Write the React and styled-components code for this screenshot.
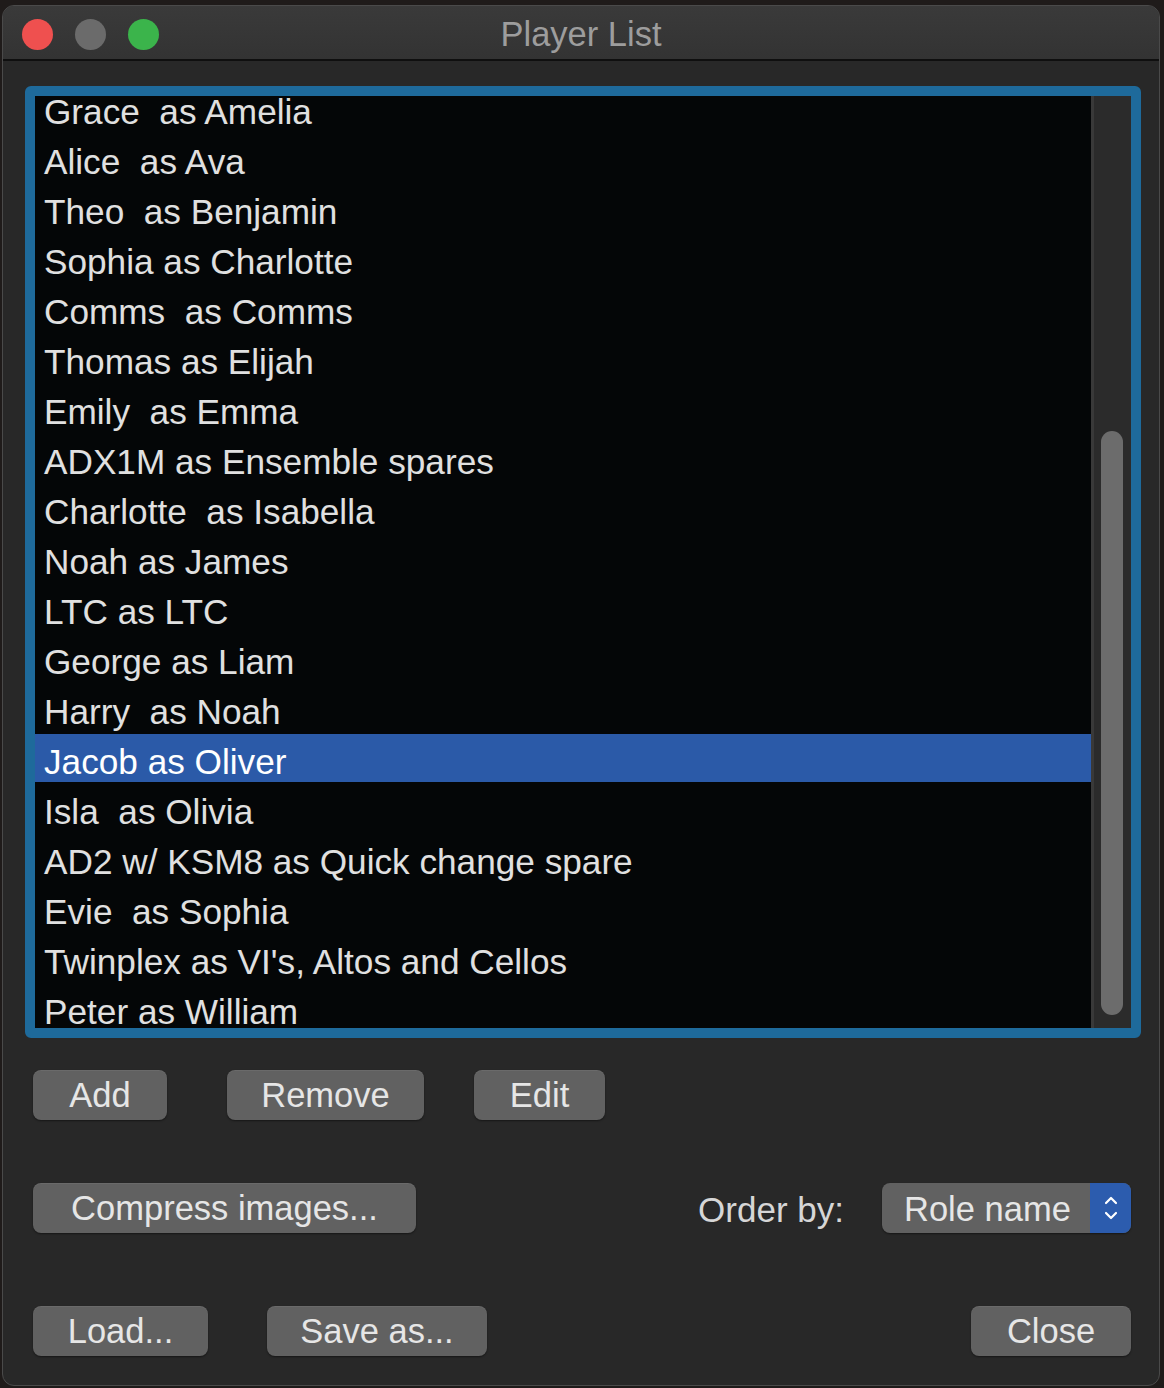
import React from 'react';
import styled, { createGlobalStyle } from 'styled-components';

const GlobalStyle = createGlobalStyle`
  html, body {
    margin: 0;
    padding: 0;
    background: #1f1b1a;
    font-family: 'Liberation Sans', Arial, sans-serif;
  }
`;

const Window = styled.div`
  margin: 5px 0 0 2px;
  width: 1158px;
  height: 1381px;
  box-sizing: border-box;
  border: 1px solid #4a4a4a;
  border-radius: 12px;
  overflow: hidden;
  background: #282828;
  display: flex;
  flex-direction: column;
`;

const TitleBar = styled.div`
  height: 55px;
  flex: none;
  box-sizing: border-box;
  padding: 4px 0 0 19px;
  display: grid;
  grid-template-columns: 1fr auto 1fr;
  align-items: center;
  background: linear-gradient(#3a3a3a, #333333);
  border-bottom: 2px solid #0f0f0f;
`;

const Lights = styled.div`
  display: flex;
  gap: 22px;
`;

const Light = styled.span`
  width: 31px;
  height: 31px;
  border-radius: 50%;
  background: ${p => p.$color};
`;

const Title = styled.div`
  font-size: 34.5px;
  color: #9d9d9d;
  padding-right: 19px;
`;

const Body = styled.div`
  padding: 25px 18px 0 22px;
`;

const ListBox = styled.div`
  width: 1116px;
  height: 952px;
  box-sizing: border-box;
  border: 10px solid #1e6a9b;
  border-radius: 6px;
  display: flex;
  background: #040607;
`;

const List = styled.div`
  flex: 1;
  overflow: hidden;
`;

// the list is scrolled a little, so the first row is clipped at the top
const Rows = styled.div`
  margin-top: -12px;
`;

const Row = styled.div`
  height: 48px;
  margin-bottom: 2px;
  box-sizing: border-box;
  padding: 5px 0 0 9px;
  line-height: 45px;
  font-size: 35.2px;
  white-space: pre;
  color: ${p => (p.$selected ? '#ffffff' : '#e0e0e0')};
  background: ${p => (p.$selected ? '#2b5aa8' : 'transparent')};
`;

const Track = styled.div`
  width: 40px;
  flex: none;
  box-sizing: border-box;
  border-left: 3px solid #393939;
  background: #2b2b2b;
  display: flex;
  flex-direction: column;
  padding: 335px 0 13px 7px;
`;

const Thumb = styled.div`
  flex: 1;
  width: 22px;
  border-radius: 11px;
  background: #6c6c6c;
`;

const Controls = styled.div`
  padding: 0 10px 0 8px;
  display: flex;
  flex-direction: column;
`;

const ButtonRow = styled.div`
  display: flex;
  align-items: center;
  margin-top: ${p => p.$top}px;
`;

const Button = styled.button`
  width: ${p => p.$w}px;
  height: 50px;
  margin-left: ${p => p.$ml || 0}px;
  border: none;
  border-radius: 8px;
  background: #616161;
  box-shadow: 0 1px 2px rgba(0, 0, 0, 0.45), inset 0 1px 0 rgba(255, 255, 255, 0.06);
  color: #e6e6e6;
  font-family: 'Liberation Sans', Arial, sans-serif;
  font-size: 34.5px;
  padding: 0;
  line-height: 50px;
`;

const Spacer = styled.div`
  flex: 1;
`;

const Label = styled.span`
  font-size: 35px;
  color: #d6d6d6;
  margin-right: 38px;
  padding-top: 3px;
`;

const Select = styled.div`
  width: 249px;
  height: 50px;
  display: flex;
  border-radius: 8px;
  overflow: hidden;
  background: #616161;
  box-shadow: 0 1px 2px rgba(0, 0, 0, 0.45);
`;

const SelectValue = styled.div`
  flex: 1;
  padding-left: 22px;
  line-height: 53px;
  font-size: 34.5px;
  color: #e6e6e6;
`;

const SelectArrows = styled.div`
  width: 41px;
  background: #2c5cae;
  display: flex;
  align-items: center;
  justify-content: center;
`;

const players = [
  'Grace  as Amelia',
  'Alice  as Ava',
  'Theo  as Benjamin',
  'Sophia as Charlotte',
  'Comms  as Comms',
  'Thomas as Elijah',
  'Emily  as Emma',
  'ADX1M as Ensemble spares',
  'Charlotte  as Isabella',
  'Noah as James',
  'LTC as LTC',
  'George as Liam',
  'Harry  as Noah',
  'Jacob as Oliver',
  'Isla  as Olivia',
  'AD2 w/ KSM8 as Quick change spare',
  'Evie  as Sophia',
  "Twinplex as VI's, Altos and Cellos",
  'Peter as William'
];

const App = () => (
  <>
    <GlobalStyle />
    <Window>
      <TitleBar>
        <Lights>
          <Light $color="#ef504f" />
          <Light $color="#6b6b6b" />
          <Light $color="#3bb44b" />
        </Lights>
        <Title>Player List</Title>
        <div />
      </TitleBar>
      <Body>
        <ListBox>
          <List>
            <Rows>
              {players.map(p => (
                <Row key={p} $selected={p === 'Jacob as Oliver'}>
                  {p}
                </Row>
              ))}
            </Rows>
          </List>
          <Track>
            <Thumb />
          </Track>
        </ListBox>
        <Controls>
          <ButtonRow $top={32}>
            <Button $w={134}>Add</Button>
            <Button $w={197} $ml={60}>Remove</Button>
            <Button $w={131} $ml={50}>Edit</Button>
          </ButtonRow>
          <ButtonRow $top={63}>
            <Button $w={383}>Compress images...</Button>
            <Spacer />
            <Label>Order by:</Label>
            <Select>
              <SelectValue>Role name</SelectValue>
              <SelectArrows>
                <svg width="14" height="28" viewBox="0 0 14 28" fill="none" stroke="#ffffff" strokeWidth="2.2" strokeLinecap="round" strokeLinejoin="round">
                  <path d="M2 9 L7 4 L12 9" />
                  <path d="M2 19 L7 24 L12 19" />
                </svg>
              </SelectArrows>
            </Select>
          </ButtonRow>
          <ButtonRow $top={73}>
            <Button $w={175}>Load...</Button>
            <Button $w={220} $ml={59}>Save as...</Button>
            <Spacer />
            <Button $w={160}>Close</Button>
          </ButtonRow>
        </Controls>
      </Body>
    </Window>
  </>
);

export default App;
